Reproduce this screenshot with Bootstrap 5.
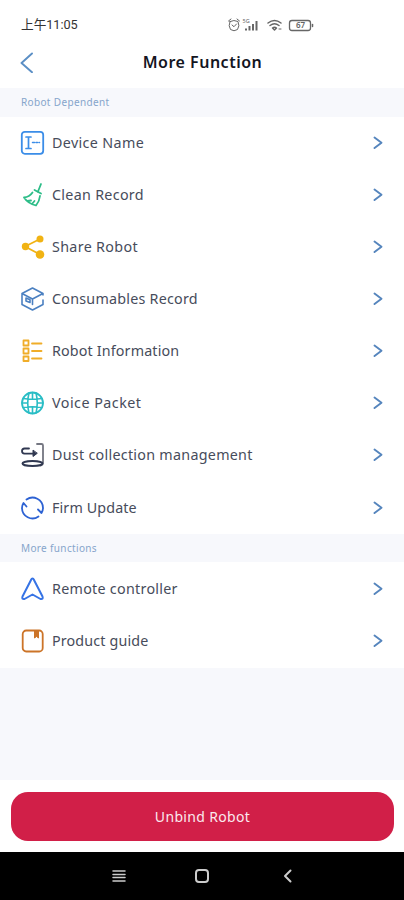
<!DOCTYPE html>
<html lang="en">
<head>
<meta charset="utf-8">
<meta name="viewport" content="width=device-width, initial-scale=1">
<title>More Function</title>
<link href="https://cdn.jsdelivr.net/npm/bootstrap@5.3.0/dist/css/bootstrap.min.css" rel="stylesheet">
<style>
body{font-family:"Noto Sans","Noto Sans CJK SC",sans-serif;background:#f7f8fc;color:#3c4150;height:900px;overflow:hidden}
svg{display:block;fill:none;stroke-linecap:round;stroke-linejoin:round;flex:none}
.statusbar{height:48px;padding:1px 90px 0 21px}
.clock{font-family:Roboto,"Noto Sans CJK SC",sans-serif;font-size:12.7px;color:#333;letter-spacing:-.05px}
.titlebar{height:40px;padding:0 20px 12px}
.titlebar h1{font-size:16px;font-weight:600;color:#14161f;letter-spacing:.5px;line-height:28px;padding-right:13px}
.section-label{height:28.5px;padding-left:21px;font-size:10px;color:#86a5cb;line-height:28px;letter-spacing:.35px}
.entry{height:52.15px;padding:0 21px 0 20px;font-size:14.3px;border:0}
.entry .caption{margin-left:7px;line-height:20px;white-space:nowrap;color:#474c5b}
.entry .chev{stroke:#5585bd;stroke-width:1.9}
.more-list{padding:1px 0 .3px}
.footer-panel{height:72px;padding:12px 10px 11px 11px}
.unbind{background:#d11f48;border-radius:17px;color:#fbe9ee;font-size:14px;letter-spacing:.33px;border:0}
.sysnav{height:48px;background:#000;padding:0 112px}
.home-key{margin-right:5px}
</style>
</head>
<body class="d-flex flex-column">
<header class="bg-white">
<div class="statusbar d-flex align-items-center justify-content-between">
<span class="clock">上午11:05</span>
<svg width="87" height="16" viewBox="0 0 87 16" stroke="#666">
<path d="M3 4.500Q7 2.500 11 4.500 13 9 10.500 12.500 7 15 3.500 12.500 1 9 3 4.500zM1.500 4 4 2M12.500 4 10 2M5 8l2 1.700L9.500 7"/>
<text x="15.500" y="6" font-size="5.500" fill="#666" stroke="none">5G</text>
<path d="M19 13.500v-2M22.500 13.500V9M26 13.500V7M29.500 13.500V4" stroke-width="2" stroke-linecap="butt"/>
<path d="M41 6q6.500-5 13 0M43 8.500q4.500-3.500 9 0M45.500 11q2-1.500 4 0L47.500 13z" stroke-width="1.500"/><path d="M52 12h2"/>
<rect x="62.500" y="3.500" width="21" height="10" rx="2.500" stroke-width="1.300"/><path d="M85.500 7.500v2" stroke-width="1.500"/>
<text x="69" y="11.300" font-size="8" font-weight="600" fill="#666" stroke="none">67</text></svg>
</div>
<div class="titlebar d-flex align-items-center">
<svg width="14" height="22" viewBox="0 0 14 22" stroke="#5b8fc5" stroke-width="1.900"><path d="M12 2.500 1.500 12 12 21.200"/></svg>
<h1 class="flex-fill text-center mb-0">More Function</h1>
</div>
</header>
<div class="section-label">Robot Dependent</div>
<main class="list-group list-group-flush bg-white"></main>
<div class="section-label">More functions</div>
<section class="more-list list-group list-group-flush bg-white"></section>
<div class="footer-panel bg-white mt-auto d-grid"><button class="btn unbind">Unbind Robot</button></div>
<nav class="sysnav d-flex align-items-center justify-content-between">
<svg width="14" height="14" viewBox="0 0 14 14" stroke="#ccc" stroke-width="1.500" stroke-linecap="butt"><path d="M1 2h12M1 5.500h12M1 8.500h12M1 12h12"/></svg>
<svg class="home-key" width="14" height="14" viewBox="0 0 14 14" stroke="#ccc" stroke-width="2"><rect x="1" y="1" width="12" height="12" rx="3"/></svg>
<svg width="9" height="14" viewBox="0 0 9 14" stroke="#ccc" stroke-width="2"><path d="M7.500 1.500 2 7l5.500 5.500"/></svg>
</nav>
<script>
// Each row: label, icon colour, icon drawing, letter spacing in px
const makeRows = (list, rows) => rows.forEach(([label, color, art, spacing]) => {
  list.insertAdjacentHTML('beforeend', `<a class="entry list-group-item d-flex align-items-center" href="#"><svg width="25" height="26" viewBox="0 0 25 26" stroke="${color}" stroke-width="1.800">${art}</svg><span class="caption" style="letter-spacing:${spacing}px">${label}</span><svg class="chev ms-auto" width="11" height="14" viewBox="0 0 11 14"><path d="m2.500 1.500 7 5.300-7 5.300"/></svg></a>`);
});
makeRows(document.querySelector('main'), [
['Device Name','#3b8de8','<rect x="1.800" y="1.800" width="21.400" height="22" rx="3"/><path d="M6 7h5M6 18.500h5M8.500 7v11.500" stroke-width="1.700"/><path d="M12.500 12.500h2M16 12.500h1.500M19 12.500h.5" stroke-width="1.500"/>',.36],
['Clean Record','#2dbd88','<path d="m21 2-3.200 8M14.500 8l6.500 3.500M12.500 10.500Q9.500 15 4 15.500q4 6 12 8 3.500-4.500 4-9.500M7 19l4-.5M12 22l2.500-3"/>',.3],
['Share Robot','#f1b313','<path d="M20 5 5 12.500l15 8"/><g fill="#f1b313" stroke="none"><circle cx="20" cy="5" r="3.500"/><circle cx="5.500" cy="12.500" r="3.700"/><circle cx="20" cy="20.500" r="4.300"/></g>',.33],
['Consumables Record','#4b80c1','<path d="M23 9V7.500L12.500 2 2 7.500V18.500L12.500 24 23 18.500V14M2 7.500l10.500 5.500L22 8M12.500 13v5.500M6 12v3l4 1.500v-2.800z" stroke-width="1.600"/>',.24],
['Robot Information','#f0ad29','<path d="M3.500 2.500h5v5h-5zM3.500 10.500h5v5h-5zM3.500 18.500h5v4.500h-5zM12 5.500h9.500M12 13h9.500M12 20.500h9.500"/>',.15],
['Voice Packet','#29bdc5','<circle cx="12.500" cy="13" r="10.500"/><path d="M3 8.500q9.500 1.500 19 0M3 17.500q9.500-1.500 19 0M9 3q-2.500 10 0 20M16 3q2.500 10 0 20M12.500 2.500V8M12.500 18v5.500M2 13h5M18 13h5" stroke-width="1.600"/>',.48],
['Dust collection management','#303851','<path d="M17 2h4.500q1.500 0 1.500 1.500V21q0 2-2 2.500" stroke="#747681"/><path d="M9 6.500H4.500Q2 6.500 2 9t2.500 2.700H15"/><path d="M13 8.500v6l4-3z" fill="#303851" stroke-width="1"/><ellipse cx="12.500" cy="21.500" rx="10" ry="2.500" stroke-width="2"/>',.28],
['Firm Update','#2d62d3','<path d="M6.500 4.500A10.500 10.500 0 0 1 23 13q0 2.500-1.500 5l-3.500-3.500M18.500 21.500A10.500 10.500 0 0 1 2 13q0-2.500 1.500-5l3 3.500"/>',.13]]);
makeRows(document.querySelector('section'), [
['Remote controller','#3673e5','<path d="M12.500 2.500Q11.500 2.500 11 4L2.500 20.500Q1.500 23.500 4.500 23L12.500 18.500l8 4.500Q23.500 23.500 22.500 20.500L14 4Q13.500 2.500 12.500 2.500z" stroke-width="2"/>',.28],
['Product guide','#cc7428','<rect x="2.700" y="2.500" width="20" height="21" rx="3.500"/><path d="M14.500 3v7l2-1.500 2 1.500V3z" fill="#cc7428" stroke-width="1"/>',.15]]);
</script>
<script src="https://cdn.jsdelivr.net/npm/bootstrap@5.3.0/dist/js/bootstrap.bundle.min.js"></script>
</body>
</html>
